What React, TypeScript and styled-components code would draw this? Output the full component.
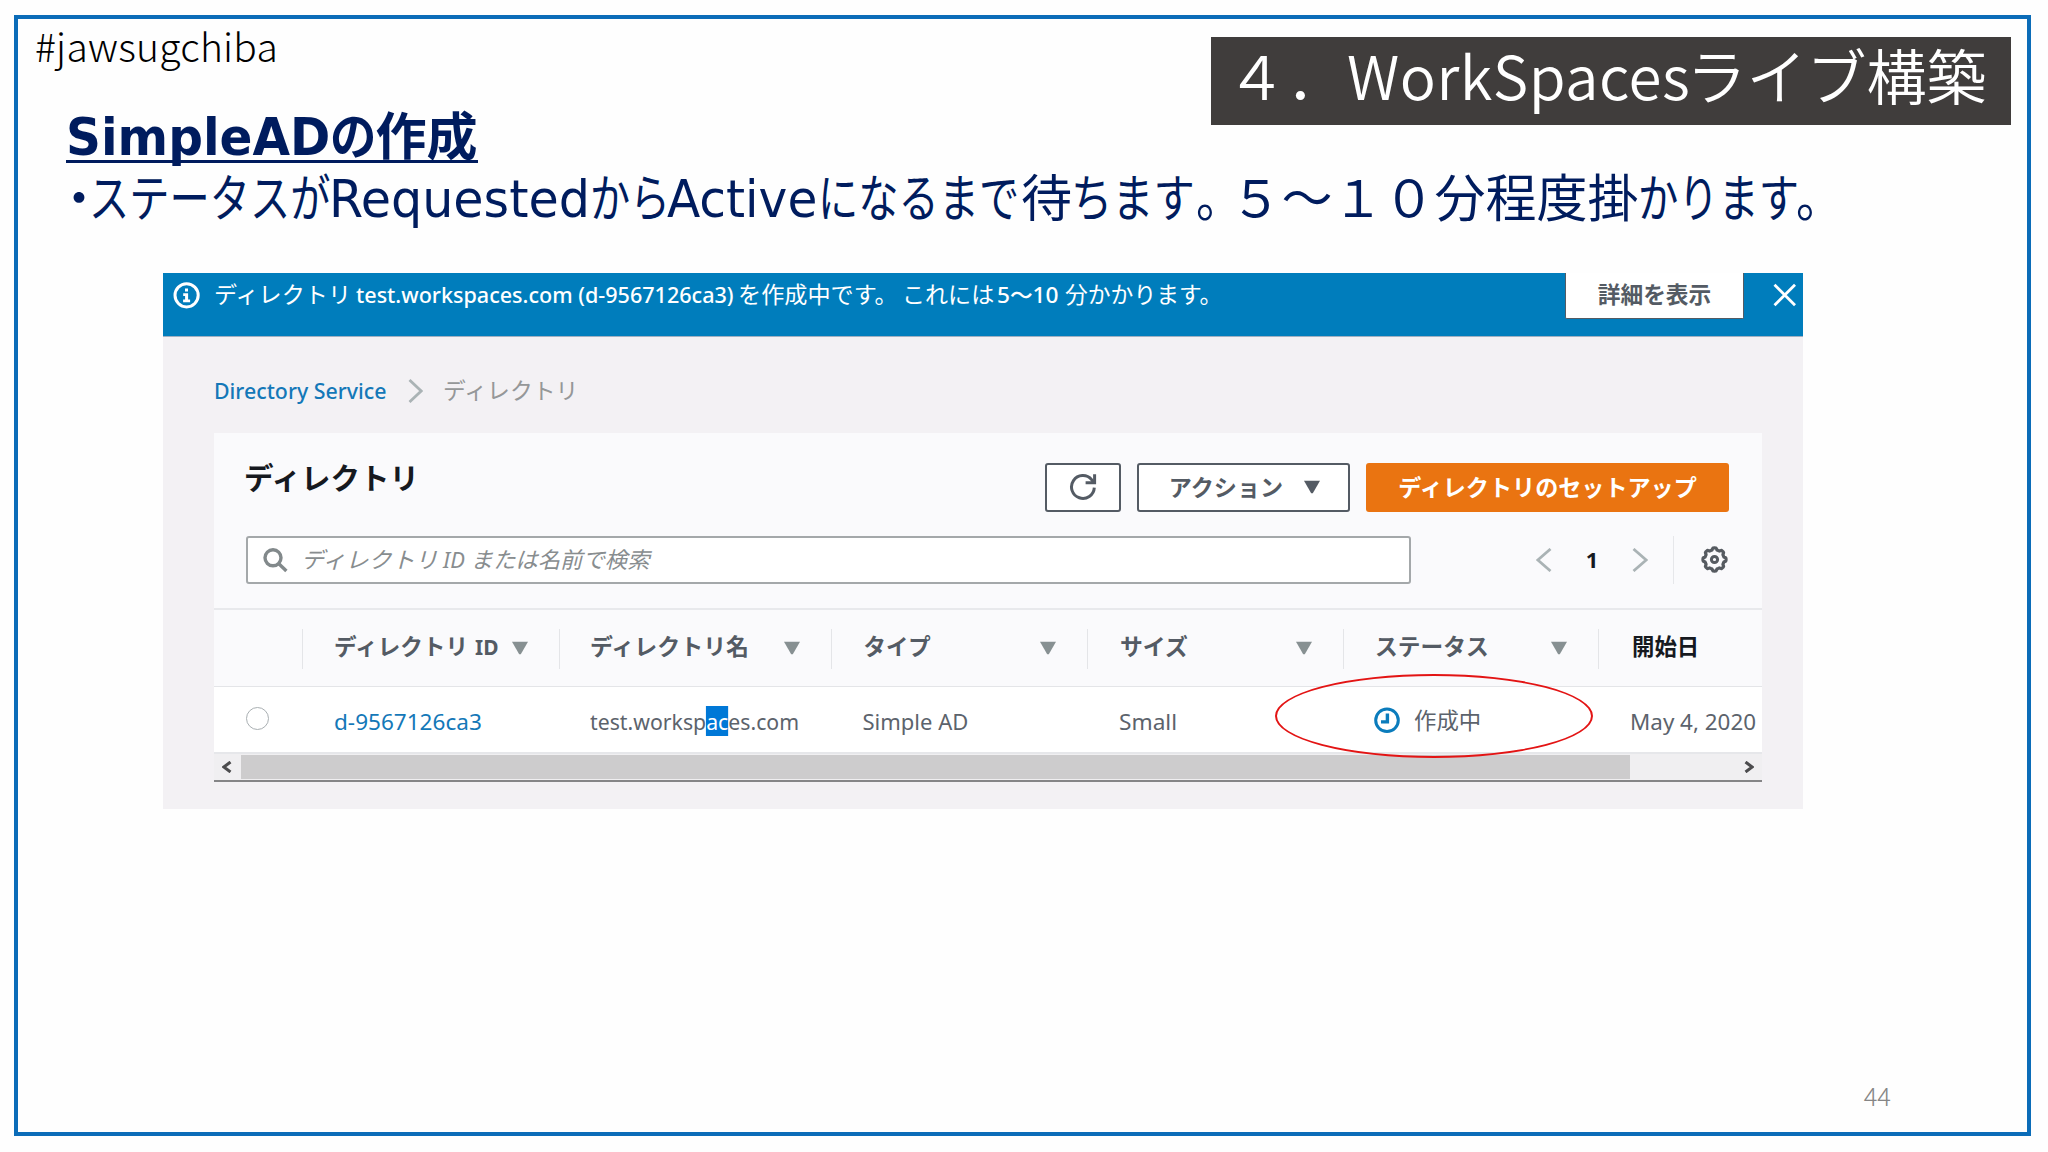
import React from 'react';
import styled, { createGlobalStyle, css } from 'styled-components';

const jp = '"Noto Sans CJK JP", sans-serif';
const ui = '"Noto Sans", "Noto Sans CJK JP", sans-serif';
const wide = '"DejaVu Sans Condensed", "DejaVu Sans", "Noto Sans CJK JP", sans-serif';

const GlobalStyle = createGlobalStyle`
  *, *::before, *::after { box-sizing: border-box; }
  body { margin: 0; background: #fefefe; font-family: ${jp}; }
`;

/* A run of text: advance width in px, with an optional horizontal condensing factor. */
const Run = styled.span<{ $w?: number; $sx?: number; $latin?: boolean }>`
  display: inline-block;
  flex: none;
  white-space: pre;
  width: ${p => (p.$w ? `${p.$w}px` : 'auto')};
  transform: ${p => (p.$sx ? `scaleX(${p.$sx})` : 'none')};
  transform-origin: 0 50%;
  ${p => p.$latin && css`font-family: ${ui}; font-size: 22px;`}
`;

const Slide = styled.main`
  display: flex;
  width: 2048px;
  height: 1152px;
  padding: 15px 17px 16px 14px;
`;
const Frame = styled.div`
  display: flex;
  flex: 1;
  flex-direction: column;
  border: 4px solid #0b6cb8;
`;
const Header = styled.header`
  display: flex;
  justify-content: space-between;
  height: 144px;
  padding-right: 16px;
`;
const HeaderLeft = styled.div`
  display: flex;
  flex-direction: column;
  align-items: flex-start;
`;
const HashTag = styled.div`
  height: 77px;
  margin: 6px 0 0 17px;
  font-size: 39px;
  font-weight: 300;
  line-height: 41px;
  letter-spacing: 0.25px;
  color: #000;
`;
const SlideTitle = styled.h1`
  display: flex;
  align-items: baseline;
  height: 61px;
  margin: 0 0 0 48px;
  border-bottom: 3px solid #001c5e;
  font-size: 51px;
  font-weight: 700;
  line-height: 62px;
  color: #001c5e;
`;
const Wide = styled(Run)`
  font-family: ${wide};
`;
const Chapter = styled.div`
  display: flex;
  width: 800px;
  height: 88px;
  margin-top: 18px;
  padding-left: 15.5px;
  background: #403d3c;
  font-size: 60px;
  font-weight: 350;
  line-height: 73px;
  color: #fff;
`;
const Spaced = styled(Run)`
  letter-spacing: 0.5px;
`;
const Lead = styled.p`
  display: flex;
  align-items: baseline;
  height: 62px;
  margin: 1px 0 0 35.5px;
  font-size: 51px;
  line-height: 62px;
  color: #001c5e;
`;
const PageNumber = styled.div`
  margin: auto 136px 19px auto;
  font-size: 25.5px;
  font-weight: 300;
  line-height: 36px;
  color: #858585;
`;

const Console = styled.section`
  position: relative;
  display: flex;
  flex-direction: column;
  width: 1640px;
  height: 536px;
  margin: 47px 0 0 145px;
  background: #f3f1f4;
  font-size: 22.4px;
  color: #545b64;
`;
const Banner = styled.div`
  display: flex;
  height: 64px;
  padding-left: 10px;
  border-bottom: 1px solid #9fb0c2;
  background: #007dbc;
  color: #fff;
  svg { flex: none; }
`;
const BannerText = styled.div`
  display: flex;
  align-items: baseline;
  width: 1365px;
  height: 44px;
  padding: 5px 0 0 14px;
  line-height: 30px;
`;
const Medium = styled(Run)`
  font-weight: 500;
`;
const BannerButton = styled.button`
  width: 179px;
  height: 46px;
  padding: 0 0 3px;
  border: 1px solid #545b64;
  border-top: 0;
  border-radius: 0 0 2px 2px;
  background: #fff;
  font: 700 22.7px/42px ${jp};
  color: #545b64;
`;
const CloseButton = styled.button`
  height: 24px;
  margin: 10px 0 0 29px;
  padding: 0;
  border: 0;
  background: none;
`;
const Breadcrumb = styled.nav`
  display: flex;
  align-items: baseline;
  height: 96px;
  padding: 37px 0 0 51px;
  line-height: 30px;
  color: #959798;
  svg { align-self: flex-start; margin: 5px 20px 0 0; }
`;
const Link = styled.a`
  color: #1478b8;
`;
const Card = styled.div`
  display: flex;
  flex-direction: column;
  width: 1548px;
  height: 349px;
  margin-left: 51px;
  border-bottom: 2px solid #858587;
  background: #fafafc;
`;
const Toolbar = styled.div`
  display: flex;
  height: 103px;
  padding: 30px 33px 0 30px;
  gap: 16px;
`;
const CardTitle = styled.h2`
  flex: 1;
  margin: -5px 0 0;
  font-size: 29.5px;
  font-weight: 700;
  line-height: 36px;
  color: #16191f;
`;
const Button = styled.button<{ $w: number; $primary?: boolean }>`
  display: flex;
  align-items: center;
  justify-content: center;
  width: ${p => p.$w}px;
  height: 49px;
  padding: 0 0 3px;
  border: ${p => (p.$primary ? '0' : '2px solid #545b64')};
  border-radius: 3px;
  background: ${p => (p.$primary ? '#ea7411' : '#fff')};
  font: 700 23.1px/30px ${jp};
  color: ${p => (p.$primary ? '#fff' : '#545b64')};
  gap: 21px;
  svg { margin-top: 2px; }
`;
const MenuButton = styled(Button)`
  padding-left: 2px;
`;
const Filters = styled.div`
  display: flex;
  height: 72px;
  padding-left: 32px;
`;
const Search = styled.div`
  display: flex;
  width: 1165px;
  height: 48px;
  padding-left: 15px;
  border: 2px solid #a4a8aa;
  border-radius: 3px;
  background: #fff;
  font-style: italic;
  line-height: 30px;
  color: #888d8f;
  svg { flex: none; margin-top: 10px; }
`;
const Placeholder = styled.div`
  display: flex;
  align-items: baseline;
  height: 42px;
  padding: 5px 0 0 13px;
`;
const Pager = styled.div`
  display: flex;
  align-items: center;
  height: 47px;
  margin-left: 125px;
  svg { flex: none; }
`;
const PageCurrent = styled.span`
  width: 80px;
  padding-bottom: 2px;
  text-align: center;
  font: 700 22px/44px ${ui};
  color: #16191f;
`;
const PagerDivider = styled.span`
  width: 1px;
  height: 48px;
  margin: 0 27px 0 25px;
  background: #e6e7ea;
`;
const columns = '88px 256.5px 272px 256px 256.5px 255px 1fr';
const HeadRow = styled.div`
  display: grid;
  grid-template-columns: ${columns};
  height: 79px;
  padding-top: 19px;
  border-top: 2px solid #e8e9ec;
  border-bottom: 1px solid #e4e5e8;
`;
const HeadCell = styled.div<{ $dark?: boolean; $pad?: number }>`
  display: flex;
  align-items: baseline;
  justify-content: space-between;
  height: 40px;
  padding: 1px 31px 0 ${p => p.$pad ?? 32}px;
  border-left: 1px solid #e4e5e8;
  font-weight: 700;
  line-height: 30px;
  color: ${p => (p.$dark ? '#16191f' : '#545b64')};
  svg { flex: none; align-self: flex-start; margin-top: 11px; }
`;
const Label = styled.span`
  display: flex;
  align-items: baseline;
`;
const BodyRow = styled.div`
  display: grid;
  grid-template-columns: ${columns};
  height: 67px;
  border-bottom: 2px solid #e6e7ea;
  background: #fff;
`;
const Cell = styled.div<{ $link?: boolean; $pad?: number }>`
  display: flex;
  height: 64px;
  padding: 19px 0 0 ${p => p.$pad ?? 32}px;
  line-height: 30px;
  color: ${p => (p.$link ? '#1478b8' : '#5c636c')};
`;
const Selected = styled.mark`
  background: #0078d7;
  color: #fff;
`;
const StatusCell = styled(Cell)`
  padding-top: 17px;
  padding-left: 31px;
  gap: 14px;
  svg { flex: none; margin-top: 3px; }
`;
const Radio = styled.span`
  width: 23px;
  height: 23px;
  margin: 19.5px 0 0 31.5px;
  border: 1.5px solid #a9afb2;
  border-radius: 50%;
  background: #fff;
`;
const ScrollBar = styled.div`
  display: flex;
  align-items: center;
  height: 26px;
  padding: 0 8px 1px;
  background: #f0eff1;
`;
const Thumb = styled.span`
  width: 1389px;
  height: 24px;
  margin: 0 auto 0 9px;
  background: #cdcccd;
`;
const Highlight = styled.div`
  position: absolute;
  left: 1112px;
  top: 401px;
  width: 318px;
  height: 84px;
  border: 2px solid #e31414;
  border-radius: 50%;
`;

const Caret = ({ color = '#879092' }: { color?: string }) => (
  <svg width="16" height="14" viewBox="0 0 16 14"><path d="M0 0.8h16L8.8 13.2H7.2z" fill={color} /></svg>
);
const Angle = ({ left, w = 15, h = 24, color = '#aab3b5', stroke = 2.8 }: { left?: boolean; w?: number; h?: number; color?: string; stroke?: number }) => (
  <svg width={w} height={h} viewBox={`0 0 ${w} ${h}`} fill="none" stroke={color} strokeWidth={stroke}>
    <path d={left ? `M${w - 1.5} 1L1.8 ${h / 2}L${w - 1.5} ${h - 1}` : `M1.5 1L${w - 1.8} ${h / 2}L1.5 ${h - 1}`} />
  </svg>
);
const InfoIcon = () => (
  <svg width="27" height="45" viewBox="0 0 27 45">
    <circle cx="13.6" cy="22.3" r="11.6" fill="none" stroke="#fff" strokeWidth="3" />
    <path d="M12 15.5h3v3h-3zM10.2 20.3h4.9v6.3h2v2.7h-7v-2.7h2v-3.7h-1.9z" fill="#fff" />
  </svg>
);
const CloseIcon = () => (
  <svg width="24" height="24" viewBox="0 0 24 24" fill="none" stroke="#fff" strokeWidth="2.8">
    <path d="M1.5 1.8l20.5 20.4M22 1.8L1.5 22.2" />
  </svg>
);
const RefreshIcon = () => (
  <svg width="28" height="28" viewBox="0 0 28 28" fill="none" stroke="#545b64" strokeWidth="3">
    <path d="M25.3 14.6A11.4 11.4 0 1 1 22.6 6.6L24.4 9" />
    <path d="M25.6 1.2v8.6h-9" />
  </svg>
);
const SearchIcon = () => (
  <svg width="25" height="25" viewBox="0 0 25 25" fill="none" stroke="#82898b" strokeWidth="3.4">
    <circle cx="10" cy="9.8" r="8" />
    <path d="M15.8 15.8l7.6 7.2" />
  </svg>
);
const gear = (() => {
  const pts: string[] = [];
  for (let i = 0; i < 96; i++) {
    const a = (i / 96) * Math.PI * 2;
    const r = 10.6 + 0.95 * Math.max(-1, Math.min(1, 1.8 * Math.cos(8 * a)));
    pts.push(`${(13.5 + r * Math.cos(a)).toFixed(2)} ${(13.5 + r * Math.sin(a)).toFixed(2)}`);
  }
  return `M${pts.join('L')}Z`;
})();
const GearIcon = () => (
  <svg width="27" height="27" viewBox="0 0 27 27" fill="none" stroke="#565b61" strokeLinejoin="round">
    <path d={gear} strokeWidth="3.2" />
    <circle cx="13.5" cy="13.5" r="3.1" strokeWidth="3" />
  </svg>
);
const PendingIcon = () => (
  <svg width="26" height="27" viewBox="0 0 26 27" fill="none" stroke="#0b7cbc">
    <circle cx="13" cy="13.3" r="11.3" strokeWidth="3" />
    <path d="M13.4 6.5v8.4H7" strokeWidth="3.4" />
  </svg>
);

export default function App() {
  return (
    <>
      <GlobalStyle />
      <Slide>
        <Frame>
          <Header>
            <HeaderLeft>
              <HashTag>#jawsugchiba</HashTag>
              <SlideTitle>
                <Wide $w={264} $sx={1.058}>SimpleAD</Wide>
                <Run $w={45.5} $sx={0.91}>の</Run>
                <Run $w={102.5}>作成</Run>
              </SlideTitle>
            </HeaderLeft>
            <Chapter>
              <Run $w={120.5}>４．</Run>
              <Spaced $w={339.5}>WorkSpaces</Spaced>
              <Run>ライブ構築</Run>
            </Chapter>
          </Header>
          <Lead>
            <Run $w={35}>・</Run>
            <Run $w={240.7} $sx={0.789}>ステータスが</Run>
            <Wide $w={260.8} $sx={1.071}>Requested</Wide>
            <Run $w={77.5} $sx={0.786}>から</Run>
            <Wide $w={151} $sx={1.06}>Active</Wide>
            <Run $w={202.5} $sx={0.789}>になるまで</Run>
            <Run $w={50.5}>待</Run>
            <Run $w={124.5} $sx={0.81}>ちます</Run>
            <Run $w={34.4} $sx={0.9}>。</Run>
            <Run $w={407.7}>５～１０分程度掛</Run>
            <Run $w={158.2} $sx={0.79}>かります</Run>
            <Run $w={40} $sx={0.9}>。</Run>
          </Lead>

          <Console>
            <Banner>
              <InfoIcon />
              <BannerText>
                <Run $w={141.7} $sx={1.032}>ディレクトリ</Run>
                <Medium $latin $w={382.5} $sx={0.98}>test.workspaces.com (d-9567126ca3)</Medium>
                <Run $w={163.5} $sx={1.033}>を作成中です。</Run>
                <Run $w={95} $sx={1.03}>これには</Run>
                <Medium $latin $w={68.5} $sx={1.03}>5～10</Medium>
                <Run $sx={1.018}>分かかります。</Run>
              </BannerText>
              <BannerButton>詳細を表示</BannerButton>
              <CloseButton aria-label="閉じる"><CloseIcon /></CloseButton>
            </Banner>
            <Breadcrumb>
              <Link><Medium $latin $w={194} $sx={0.97}>Directory Service</Medium></Link>
              <Angle />
              <Run $sx={1.02}>ディレクトリ</Run>
            </Breadcrumb>

            <Card>
              <Toolbar>
                <CardTitle>ディレクトリ</CardTitle>
                <Button $w={76} aria-label="更新"><RefreshIcon /></Button>
                <MenuButton $w={213}>アクション<Caret color="#545b64" /></MenuButton>
                <Button $w={363} $primary>ディレクトリのセットアップ</Button>
              </Toolbar>
              <Filters>
                <Search>
                  <SearchIcon />
                  <Placeholder>
                    <Run $w={142} $sx={1.03}>ディレクトリ</Run>
                    <Run $latin $w={27.5}>ID</Run>
                    <Run>または名前で検索</Run>
                  </Placeholder>
                </Search>
                <Pager>
                  <Angle left w={16} />
                  <PageCurrent>1</PageCurrent>
                  <Angle w={16} />
                  <PagerDivider />
                  <GearIcon />
                </Pager>
              </Filters>
              <HeadRow>
                <span />
                <HeadCell $pad={31}>
                  <Label><Run $w={141} $sx={1.01}>ディレクトリ</Run><Run $latin $sx={0.95}>ID</Run></Label><Caret />
                </HeadCell>
                <HeadCell $pad={30.5}><Run $sx={1.025}>ディレクトリ名</Run><Caret /></HeadCell>
                <HeadCell><Run>タイプ</Run><Caret /></HeadCell>
                <HeadCell><Run $sx={1.02}>サイズ</Run><Caret /></HeadCell>
                <HeadCell $pad={31}><Run $sx={1.015}>ステータス</Run><Caret /></HeadCell>
                <HeadCell $dark $pad={33}><Run>開始日</Run></HeadCell>
              </HeadRow>
              <BodyRow>
                <Radio />
                <Cell $link><Run $latin $sx={1.025}>d-9567126ca3</Run></Cell>
                <Cell $pad={31}><Run $latin $sx={0.966}>test.worksp<Selected>ac</Selected>es.com</Run></Cell>
                <Cell><Run $latin>Simple AD</Run></Cell>
                <Cell><Run $latin $sx={1.03}>Small</Run></Cell>
                <StatusCell><PendingIcon /><Run>作成中</Run></StatusCell>
                <Cell><Run $latin $sx={1.018}>May 4, 2020</Run></Cell>
              </BodyRow>
              <ScrollBar>
                <Angle left w={10} h={12} color="#4c4c4e" stroke={3} />
                <Thumb />
                <Angle w={10} h={12} color="#4c4c4e" stroke={3} />
              </ScrollBar>
            </Card>
            <Highlight />
          </Console>
          <PageNumber>44</PageNumber>
        </Frame>
      </Slide>
    </>
  );
}
